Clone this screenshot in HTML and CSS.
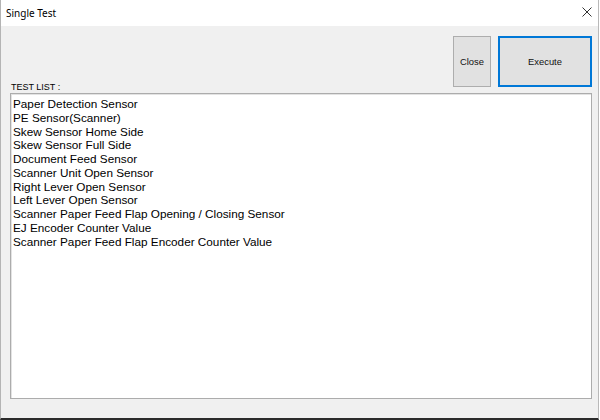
FILE: index.html
```html
<!DOCTYPE html>
<html lang="en">
<head>
    <meta charset="UTF-8">
    <meta name="viewport" content="width=device-width, initial-scale=1.0">
    <title>Single Test</title>
    <link rel="stylesheet" href="styles.css">
</head>
<body>
    <div class="window">
        <div class="titlebar">
            <span class="title">Single Test</span>
            <svg class="close-x" width="10" height="10" viewBox="0 0 10 10">
                <path d="M0.5 0.5 L9.5 9.5 M9.5 0.5 L0.5 9.5" stroke="#333" stroke-width="1" fill="none"/>
            </svg>
        </div>
        <div class="content">
            <div class="toolbar">
                <button class="btn btn-close">Close</button>
                <button class="btn btn-execute">Execute</button>
            </div>
            <div class="label">TEST LIST :</div>
            <ul class="test-list">
                <li>Paper Detection Sensor</li>
                <li>PE Sensor(Scanner)</li>
                <li>Skew Sensor Home Side</li>
                <li>Skew Sensor Full Side</li>
                <li>Document Feed Sensor</li>
                <li>Scanner Unit Open Sensor</li>
                <li>Right Lever Open Sensor</li>
                <li>Left Lever Open Sensor</li>
                <li>Scanner Paper Feed Flap Opening / Closing Sensor</li>
                <li>EJ Encoder Counter Value</li>
                <li>Scanner Paper Feed Flap Encoder Counter Value</li>
            </ul>
        </div>
    </div>
</body>
</html>
```

FILE: styles.css
```css
body {
    margin: 0;
    background-color: #ffffff;
}
.window {
    width: 599px;
    height: 420px;
    box-sizing: border-box;
    background-color: #f0f0f0;
    border-left: 1px solid #b4b4b4;
    border-right: 1px solid #b9b9b9;
    border-bottom: 2px solid #2b2b2b;
}
.titlebar {
    height: 26px;
    background-color: #ffffff;
    display: flex;
    justify-content: space-between;
    align-items: flex-start;
}
.title {
    font-family: "Noto Sans", sans-serif;
    font-size: 10px;
    line-height: 26px;
    padding-left: 5px;
    color: #000;
}
.close-x {
    margin-top: 7px;
    margin-right: 6px;
}
.content {
    padding: 10px 6px 0 9px;
}
.toolbar {
    display: flex;
    justify-content: flex-end;
    gap: 7px;
}
.btn {
    height: 51px;
    box-sizing: border-box;
    font-family: "Liberation Sans", Arial, sans-serif;
    font-size: 9.4px;
    color: #111;
    background-color: #e1e1e1;
    border: 1px solid #adadad;
    padding: 0;
}
.btn-close {
    width: 38px;
}
.btn-execute {
    width: 94px;
    border: 2px solid #0078d7;
}
.label {
    margin-top: -5px;
    font-family: "Liberation Sans", Arial, sans-serif;
    font-size: 9px;
    line-height: 11px;
    padding-left: 1px;
    color: #000;
}
.test-list {
    list-style: none;
    margin: 0;
    height: 306px;
    box-sizing: border-box;
    padding: 3px 2px;
    background-color: #ffffff;
    border: 1px solid #acacac;
    box-shadow: inset 1px 1px 0 #e3e3e3;
    font-family: "Liberation Sans", Arial, sans-serif;
    font-size: 11.75px;
    line-height: 13.75px;
    color: #000;
}
```
